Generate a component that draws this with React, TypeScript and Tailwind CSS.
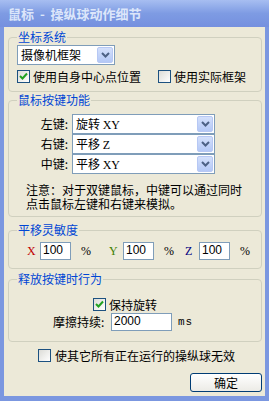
import React from "react";

const cjk = "font-['Noto_Sans_CJK_SC',sans-serif]";

function Group({ title, className, children }: { title: string; className: string; children: React.ReactNode }) {
  return (
    <div className={`relative border border-[#D0D0BF] rounded-[4px] ${className}`}>
      <span className="absolute -top-[8px] left-[8px] bg-[#ECE9D8] px-[1px] text-[12px] leading-[14px] text-[#0046D5]">
        {title}
      </span>
      {children}
    </div>
  );
}

function Arrow() {
  return (
    <div className="w-[16px] h-[16px] rounded-[2px] border border-[#B7C8F4] bg-gradient-to-b from-[#D4E0FB] to-[#B4C8F6] flex items-center justify-center">
      <svg width="9" height="6" viewBox="0 0 9 6">
        <path d="M1 1 L4.5 4.5 L8 1" fill="none" stroke="#4D6185" strokeWidth="2" />
      </svg>
    </div>
  );
}

function Combo({ value, width }: { value: React.ReactNode; width: string }) {
  return (
    <div className={`${width} h-[20px] border border-[#7F9DB9] bg-white flex items-center justify-between pl-[3px] pr-[1px]`}>
      <span className="text-[12px] leading-[14px] text-black whitespace-pre">{value}</span>
      <Arrow />
    </div>
  );
}

function Check({ checked }: { checked?: boolean }) {
  return (
    <div className="w-[13px] h-[13px] border border-[#1C5180] bg-gradient-to-br from-[#DCDCD7] to-white flex items-center justify-center shrink-0">
      {checked && (
        <svg width="9" height="9" viewBox="0 0 9 9">
          <path d="M1 4 L3.5 6.5 L8 1.5" fill="none" stroke="#21A121" strokeWidth="2" />
        </svg>
      )}
    </div>
  );
}

function Edit({ value, width }: { value: string; width: string }) {
  return (
    <div className={`${width} h-[18px] border border-[#7F9DB9] bg-white pl-[2px] flex items-start`}>
      <span className="font-['Liberation_Sans',sans-serif] text-[12px] leading-[14px] text-black">{value}</span>
    </div>
  );
}

const latin = "font-['Liberation_Serif','Noto_Sans_CJK_SC',serif]";

export default function App() {
  return (
    <div className={`w-[269px] h-[401px] bg-[#7B97E0] flex flex-col overflow-hidden ${cjk}`}>
      <div className="h-[27px] shrink-0 bg-gradient-to-b from-[#A7BEF1] via-[#7E9BE3] to-[#7590DF] flex items-center pl-[8px]">
        <span className="text-[13px] font-bold text-[#DCE6FA] whitespace-pre leading-[16px]">鼠标  -  操纵球动作细节</span>
      </div>
      <div className="flex-1 mx-[4px] mb-[5px] bg-[#ECE9D8] pl-[4px] pr-[3px] flex flex-col text-[12px] text-black">
        <Group title="坐标系统" className="mt-[10px] h-[55px] pt-[7px] pl-[8px]">
          <Combo value="摄像机框架" width="w-[98px]" />
          <div className="flex items-center mt-[5px] h-[13px]">
            <Check checked />
            <span className="ml-[3px] leading-[14px]">使用自身中心点位置</span>
            <div className="ml-[17px]">
              <Check />
            </div>
            <span className="ml-[3px] leading-[14px]">使用实际框架</span>
          </div>
        </Group>

        <Group title="鼠标按键功能" className="mt-[8px] h-[117px] pt-[13px]">
          {[
            ["左键:", "旋转 ", "XY"],
            ["右键:", "平移 ", "Z"],
            ["中键:", "平移 ", "XY"],
          ].map(([k, a, b]) => (
            <div key={k} className="flex items-center h-[20px]">
              <span className="w-[63px] text-right pr-[4px] leading-[14px]">{k}</span>
              <Combo
                width="w-[143px]"
                value={
                  <>
                    {a}
                    <span className={latin}>{b}</span>
                  </>
                }
              />
            </div>
          ))}
          <p className="mt-[9px] ml-[17px] leading-[14px]">
            注意：对于双键鼠标，中键可以通过同时
            <br />
            点击鼠标左键和右键来模拟。
          </p>
        </Group>

        <Group title="平移灵敏度" className="mt-[13px] h-[39px] pt-[11px] pl-[18px]">
          <div className="flex items-center">
            <span className={`${latin} text-[#C00000] w-[13px]`}>X</span>
            <Edit value="100" width="w-[31px]" />
            <span className={`${latin} ml-[10px] w-[28px]`}>%</span>
            <span className={`${latin} text-[#3C8000] w-[14px]`}>Y</span>
            <Edit value="100" width="w-[31px]" />
            <span className={`${latin} ml-[10px] w-[21px]`}>%</span>
            <span className={`${latin} text-[#000080] w-[14px]`}>Z</span>
            <Edit value="100" width="w-[31px]" />
            <span className={`${latin} ml-[10px]`}>%</span>
          </div>
        </Group>

        <Group title="释放按键时行为" className="mt-[10px] h-[63px] pt-[18px]">
          <div className="flex items-center h-[13px] pl-[84px]">
            <Check checked />
            <span className="ml-[3px] leading-[14px]">保持旋转</span>
          </div>
          <div className="flex items-center mt-[2px] pl-[44px]">
            <span className="w-[58px] leading-[14px]">摩擦持续:</span>
            <Edit value="2000" width="w-[61px]" />
            <span className="ml-[6px] font-['Liberation_Mono',monospace] text-[11px] tracking-[1px]">ms</span>
          </div>
        </Group>

        <div className="flex items-center h-[13px] mt-[7px] pl-[30px]">
          <Check />
          <span className="ml-[4px] leading-[14px]">使其它所有正在运行的操纵球无效</span>
        </div>

        <div className="flex justify-end mt-[11px]">
          <button className="w-[72px] h-[19px] rounded-[3px] border border-[#003C74] bg-gradient-to-b from-white to-[#ECEBE6] text-[12px] leading-[14px] text-black">
            确定
          </button>
        </div>
      </div>
    </div>
  );
}
